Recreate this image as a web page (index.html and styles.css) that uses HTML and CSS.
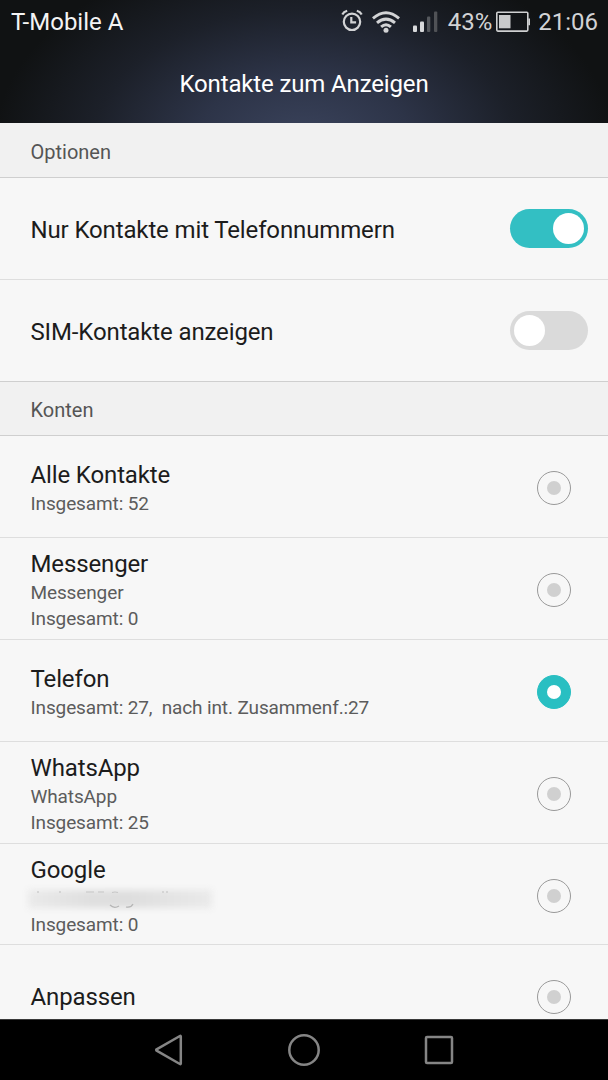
FILE: index.html
```html
<!DOCTYPE html>
<html lang="de">
<head>
    <meta charset="UTF-8">
    <meta name="viewport" content="width=device-width, initial-scale=1.0">
    <title>Kontakte zum Anzeigen</title>
    <link rel="stylesheet" href="styles.css">
</head>
<body>
    <div class="screen">
        <header class="header">
            <div class="status-bar">
                <span class="carrier">T-Mobile A</span>
                <svg class="icon-alarm" width="22" height="24" viewBox="0 0 22 24" fill="none" stroke="#d2d3d5" stroke-width="2.2">
                    <circle cx="11" cy="13.8" r="8.2"/>
                    <path d="M10.3 9v5.4h4.8M1.3 6.4Q2.7 3.6 6.2 2.7M20.7 6.4Q19.3 3.6 15.8 2.7"/>
                </svg>
                <svg class="icon-wifi" width="28" height="22" viewBox="0 0 28 22" fill="none" stroke="#d2d3d5" stroke-width="3">
                    <path d="M.9 7.4Q14-4 27.1 7.4M5 11.9Q14 4.3 23 11.9M9.1 15.9Q14 11.7 18.9 15.9"/>
                    <circle cx="14" cy="19.2" r="2.5" fill="#d2d3d5" stroke="none"/>
                </svg>
                <svg class="icon-signal" width="25" height="22" viewBox="0 0 25 22">
                    <rect x="0" y="14.5" width="4" height="6.5" rx="1" fill="#d8d9db"/>
                    <rect x="7" y="10.5" width="4" height="10.5" rx="1" fill="#d8d9db"/>
                    <rect x="14" y="5.5" width="3.3" height="15.5" rx="1" fill="#55585d"/>
                    <rect x="21" y="0.5" width="3.3" height="20.5" rx="1" fill="#505256"/>
                </svg>
                <span class="percent">43%</span>
                <svg class="icon-battery" width="34" height="22" viewBox="0 0 34 22">
                    <rect x=".8" y="1.3" width="31" height="18.8" rx="1" fill="none" stroke="#cfd0d1" stroke-width="1.6"/>
                    <rect x="3" y="4" width="11.5" height="13.3" fill="#c9cacb"/>
                    <path d="M32.3 7.5h1.7v6.8h-1.7z" fill="#cfd0d1"/>
                </svg>
                <span class="clock">21:06</span>
            </div>
            <h1 class="title">Kontakte zum Anzeigen</h1>
        </header>

        <main class="content">
            <h2 class="section first">Optionen</h2>
            <div class="row">
                <div class="label"><p class="name">Nur Kontakte mit Telefonnummern</p></div>
                <div class="switch on"></div>
            </div>
            <div class="row last">
                <div class="label"><p class="name">SIM-Kontakte anzeigen</p></div>
                <div class="switch"></div>
            </div>

            <h2 class="section">Konten</h2>
            <div class="row account">
                <div class="label">
                    <p class="name">Alle Kontakte</p>
                    <p class="sub">Insgesamt: 52</p>
                </div>
                <div class="radio"></div>
            </div>
            <div class="row account">
                <div class="label">
                    <p class="name">Messenger</p>
                    <p class="sub">Messenger</p>
                    <p class="sub">Insgesamt: 0</p>
                </div>
                <div class="radio"></div>
            </div>
            <div class="row account">
                <div class="label">
                    <p class="name">Telefon</p>
                    <p class="sub">Insgesamt: 27,&nbsp; nach int. Zusammenf.:27</p>
                </div>
                <div class="radio checked"></div>
            </div>
            <div class="row account">
                <div class="label">
                    <p class="name">WhatsApp</p>
                    <p class="sub">WhatsApp</p>
                    <p class="sub">Insgesamt: 25</p>
                </div>
                <div class="radio"></div>
            </div>
            <div class="row account short">
                <div class="label">
                    <p class="name">Google</p>
                    <!-- account address is smudged out -->
                    <div class="sub redacted">
                        <div class="smudge"></div>
                        <svg class="traces" width="188" height="20" viewBox="0 0 188 20" fill="none" stroke="#c6c6c6" stroke-width="1.2">
                            <path d="M10 1v2M32 1v2M58 2h8M70 2h6M84 2.5q3-1 6 0M135 1v2M139 1v2"/>
                            <path d="M82 15q4 4 9 1M98 17q5 1 7-3" stroke="#b4b4b4"/>
                        </svg>
                    </div>
                    <p class="sub">Insgesamt: 0</p>
                </div>
                <div class="radio"></div>
            </div>
            <div class="row account">
                <div class="label"><p class="name">Anpassen</p></div>
                <div class="radio"></div>
            </div>
        </main>

        <nav class="nav-bar">
            <svg width="30" height="34" viewBox="0 0 30 34"><path d="M26.8 3.4v27.2q0 .9-.9.4L2.6 17.7q-.8-.7 0-1.4L25.9 3q.9-.5.9.4z"/></svg>
            <svg width="34" height="34" viewBox="0 0 34 34"><circle cx="17" cy="17" r="14.7"/></svg>
            <svg width="30" height="34" viewBox="0 0 30 34"><rect x="2" y="4" width="26" height="26" rx="1"/></svg>
        </nav>
    </div>
</body>
</html>
```

FILE: styles.css
```css
* {
    margin: 0;
    padding: 0;
    box-sizing: border-box;
}

body {
    font-family: Roboto, 'Liberation Sans', sans-serif;
    background-color: #f7f7f7;
    color: #1c1c1c;
}

.screen {
    width: 608px;
    height: 1080px;
    display: flex;
    flex-direction: column;
    overflow: hidden;
}

/* header */
.header {
    height: 123px;
    flex-shrink: 0;
    background: radial-gradient(ellipse 310px 200px at 304px 145px, #3b445d 0%, #2d3448 35%, #1c2029 68%, #101213 100%);
    color: #fff;
}

.status-bar {
    height: 44px;
    padding: 0 10px 0 11px;
    display: flex;
    align-items: center;
    font-size: 24px;
    color: #d2d3d5;
}

.carrier {
    color: #f4f4f4;
    margin-right: auto;
}

.icon-alarm {
    margin-right: 9px;
    margin-top: -4px;
}

.icon-wifi {
    margin-right: 13px;
}

.icon-signal {
    margin-right: 10px;
}

.percent {
    margin-right: 4px;
}

.icon-battery {
    margin-right: 8px;
}

.title {
    height: 80px;
    text-align: center;
    font-size: 24px;
    font-weight: 400;
    letter-spacing: -0.14px;
    line-height: 81px;
}

/* list */
.content {
    flex: 1;
    min-height: 0;
    overflow: hidden;
}

.section {
    height: 54px;
    padding-left: 30.5px;
    font-size: 20px;
    font-weight: 400;
    line-height: 56px;
    color: #555;
    background-color: #f1f1f1;
    border-bottom: 1px solid #cfcfcf;
}

.section.first {
    height: 55px;
    line-height: 59px;
}

.row {
    height: 102px;
    padding: 0 20px 0 30.5px;
    display: flex;
    align-items: center;
    justify-content: space-between;
    border-bottom: 1px solid #dedede;
}

.row.account {
    padding-top: 2px;
}

.row.last {
    border-bottom-color: #cfcfcf;
}

.row.account.short {
    height: 101px;
    padding-top: 4px;
}

.name {
    font-size: 24px;
    line-height: 32px;
    letter-spacing: -0.13px;
}

.row:not(.account) .name {
    padding-top: 2px;
}

.sub {
    font-size: 19px;
    line-height: 26px;
    letter-spacing: -0.12px;
    color: #5c5c5c;
}

.redacted {
    position: relative;
    height: 26px;
}

.smudge {
    position: absolute;
    left: -3px;
    top: 4px;
    width: 184px;
    height: 18px;
    background: linear-gradient(90deg, #eaeaea, #dfdfdf 35%, #dedede 55%, #eaeaea);
    filter: blur(3px);
}

.traces {
    position: absolute;
    left: -3px;
    top: 4px;
    filter: blur(0.5px);
}

.switch {
    width: 78px;
    height: 39px;
    padding: 4px;
    border-radius: 20px;
    background-color: #dadada;
    display: flex;
}

.switch::after {
    content: '';
    width: 31px;
    height: 31px;
    border-radius: 50%;
    background-color: #fff;
}

.switch.on {
    background-color: #33bfc3;
    justify-content: flex-end;
}

.radio {
    width: 34px;
    height: 34px;
    margin-right: 17px;
    border: 1px solid #999;
    border-radius: 50%;
    display: flex;
    align-items: center;
    justify-content: center;
}

.radio::after {
    content: '';
    width: 14px;
    height: 14px;
    border-radius: 50%;
    background-color: #d0d0d0;
}

.radio.checked {
    border-color: #29bfc2;
    background-color: #29bfc2;
}

.radio.checked::after {
    background-color: #fff;
}

/* system navigation */
.nav-bar {
    height: 61px;
    flex-shrink: 0;
    display: flex;
    align-items: center;
    justify-content: space-between;
    padding: 0 154px;
    background-color: #000;
    border-top: 1px solid #3a3a3a;
}

.nav-bar svg {
    fill: none;
    stroke: #858585;
    stroke-width: 2.5;
    stroke-linejoin: round;
}
```
